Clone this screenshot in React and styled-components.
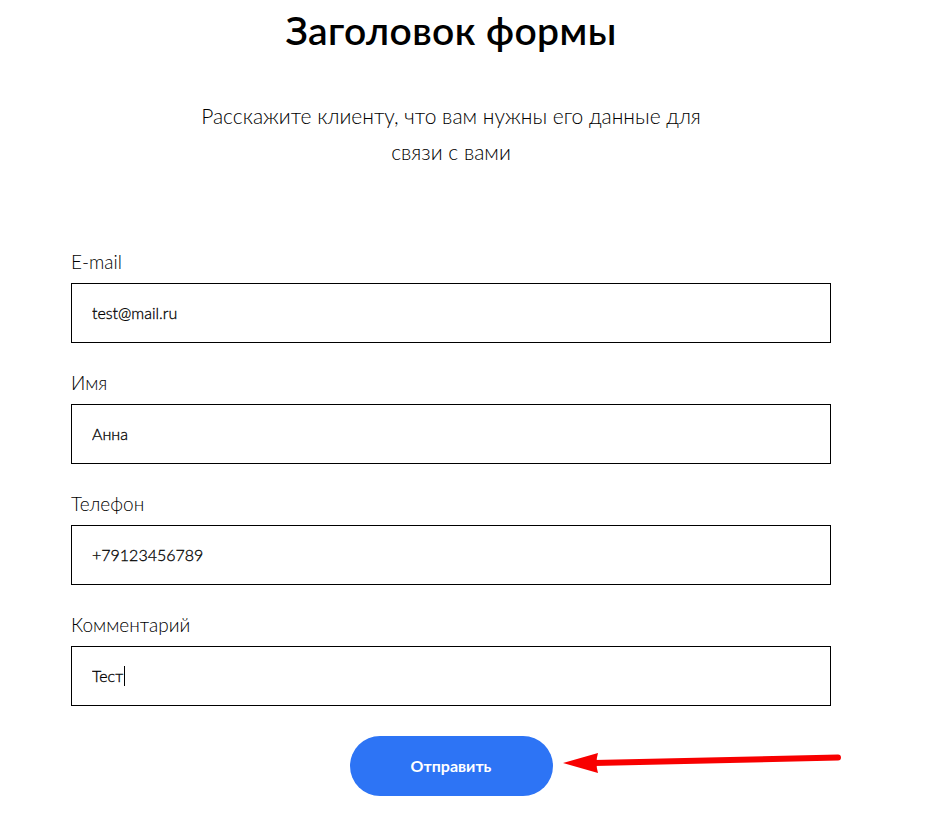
import React from 'react'
import styled, { createGlobalStyle } from 'styled-components'

const GlobalStyle = createGlobalStyle`
  body {
    margin: 0;
    background: #fff;
    font-family: Lato, "Noto Sans", sans-serif;
    color: #000;
  }
`

const Page = styled.div`
  padding-left: 71px;
  padding-top: 7px;
`

const Container = styled.div`
  width: 760px;
  display: flex;
  flex-direction: column;
`

const Title = styled.h1`
  margin: 0;
  font-size: 39px;
  line-height: 1.2;
  font-weight: 600;
  text-align: center;
  letter-spacing: 0.4px;
`

const Subtitle = styled.p`
  margin: 44px auto 0;
  max-width: 520px;
  font-size: 21px;
  line-height: 36px;
  font-weight: 300;
  text-align: center;
  color: #000;
`

const Form = styled.form`
  margin-top: 80px;
  display: flex;
  flex-direction: column;
  gap: 28px;
`

const FieldGroup = styled.label`
  display: flex;
  flex-direction: column;
  gap: 9px;
`

const Label = styled.span`
  font-size: 19px;
  line-height: 24px;
  font-weight: 300;
  color: #000;
`

const InputWrap = styled.div`
  position: relative;
`

const Input = styled.input`
  display: block;
  box-sizing: border-box;
  width: 100%;
  height: 60px;
  padding: 0 20px;
  border: 1px solid #000;
  border-radius: 0;
  outline: none;
  font-family: Lato, "Noto Sans", sans-serif;
  font-size: 16px;
  font-weight: 300;
  color: #000;
  -webkit-text-stroke: 0.3px #000;
  background: #fff;
`

const CaretLayer = styled.span`
  position: absolute;
  left: 21px;
  top: 50%;
  transform: translateY(-50%);
  display: flex;
  align-items: center;
  font-size: 16px;
  font-weight: 300;
  pointer-events: none;
`

const Ghost = styled.span`
  color: transparent;
`

const Caret = styled.span`
  width: 1px;
  height: 20px;
  margin-left: 1px;
  background: #000;
`

const ButtonRow = styled.div`
  position: relative;
  margin-top: 2px;
  display: flex;
  justify-content: center;
`

const SubmitButton = styled.button`
  width: 203px;
  height: 60px;
  border: none;
  border-radius: 30px;
  background: #2d74f5;
  color: #fff;
  font-family: inherit;
  font-size: 16px;
  font-weight: 700;
  cursor: pointer;
`

const Arrow = styled.svg`
  position: absolute;
  left: 489px;
  top: 12px;
`

const fields = [
  { label: 'E-mail', value: 'test@mail.ru', type: 'email' },
  { label: 'Имя', value: 'Анна', type: 'text' },
  { label: 'Телефон', value: '+79123456789', type: 'tel' },
  { label: 'Комментарий', value: 'Тест', type: 'text', focus: true },
]

const App = () => {
  return (
    <Page>
      <GlobalStyle />
      <Container>
        <Title>Заголовок формы</Title>
        <Subtitle>Расскажите клиенту, что вам нужны его данные для связи с вами</Subtitle>
        <Form onSubmit={e => e.preventDefault()}>
          {fields.map(field => (
            <FieldGroup key={field.label}>
              <Label>{field.label}</Label>
              <InputWrap>
                <Input type={field.type} defaultValue={field.value} />
                {field.focus && (
                  <CaretLayer>
                    <Ghost>{field.value}</Ghost>
                    <Caret />
                  </CaretLayer>
                )}
              </InputWrap>
            </FieldGroup>
          ))}
          <ButtonRow>
            <SubmitButton type="submit">Отправить</SubmitButton>
            <Arrow width="282" height="30" viewBox="0 0 282 30">
              <line x1="34" y1="15" x2="278" y2="9.5" stroke="#f80000" strokeWidth="6" strokeLinecap="round" />
              <path d="M3 15 L38 5 Q35 15 38 25 Z" fill="#f80000" />
            </Arrow>
          </ButtonRow>
        </Form>
      </Container>
    </Page>
  )
}

export default App
